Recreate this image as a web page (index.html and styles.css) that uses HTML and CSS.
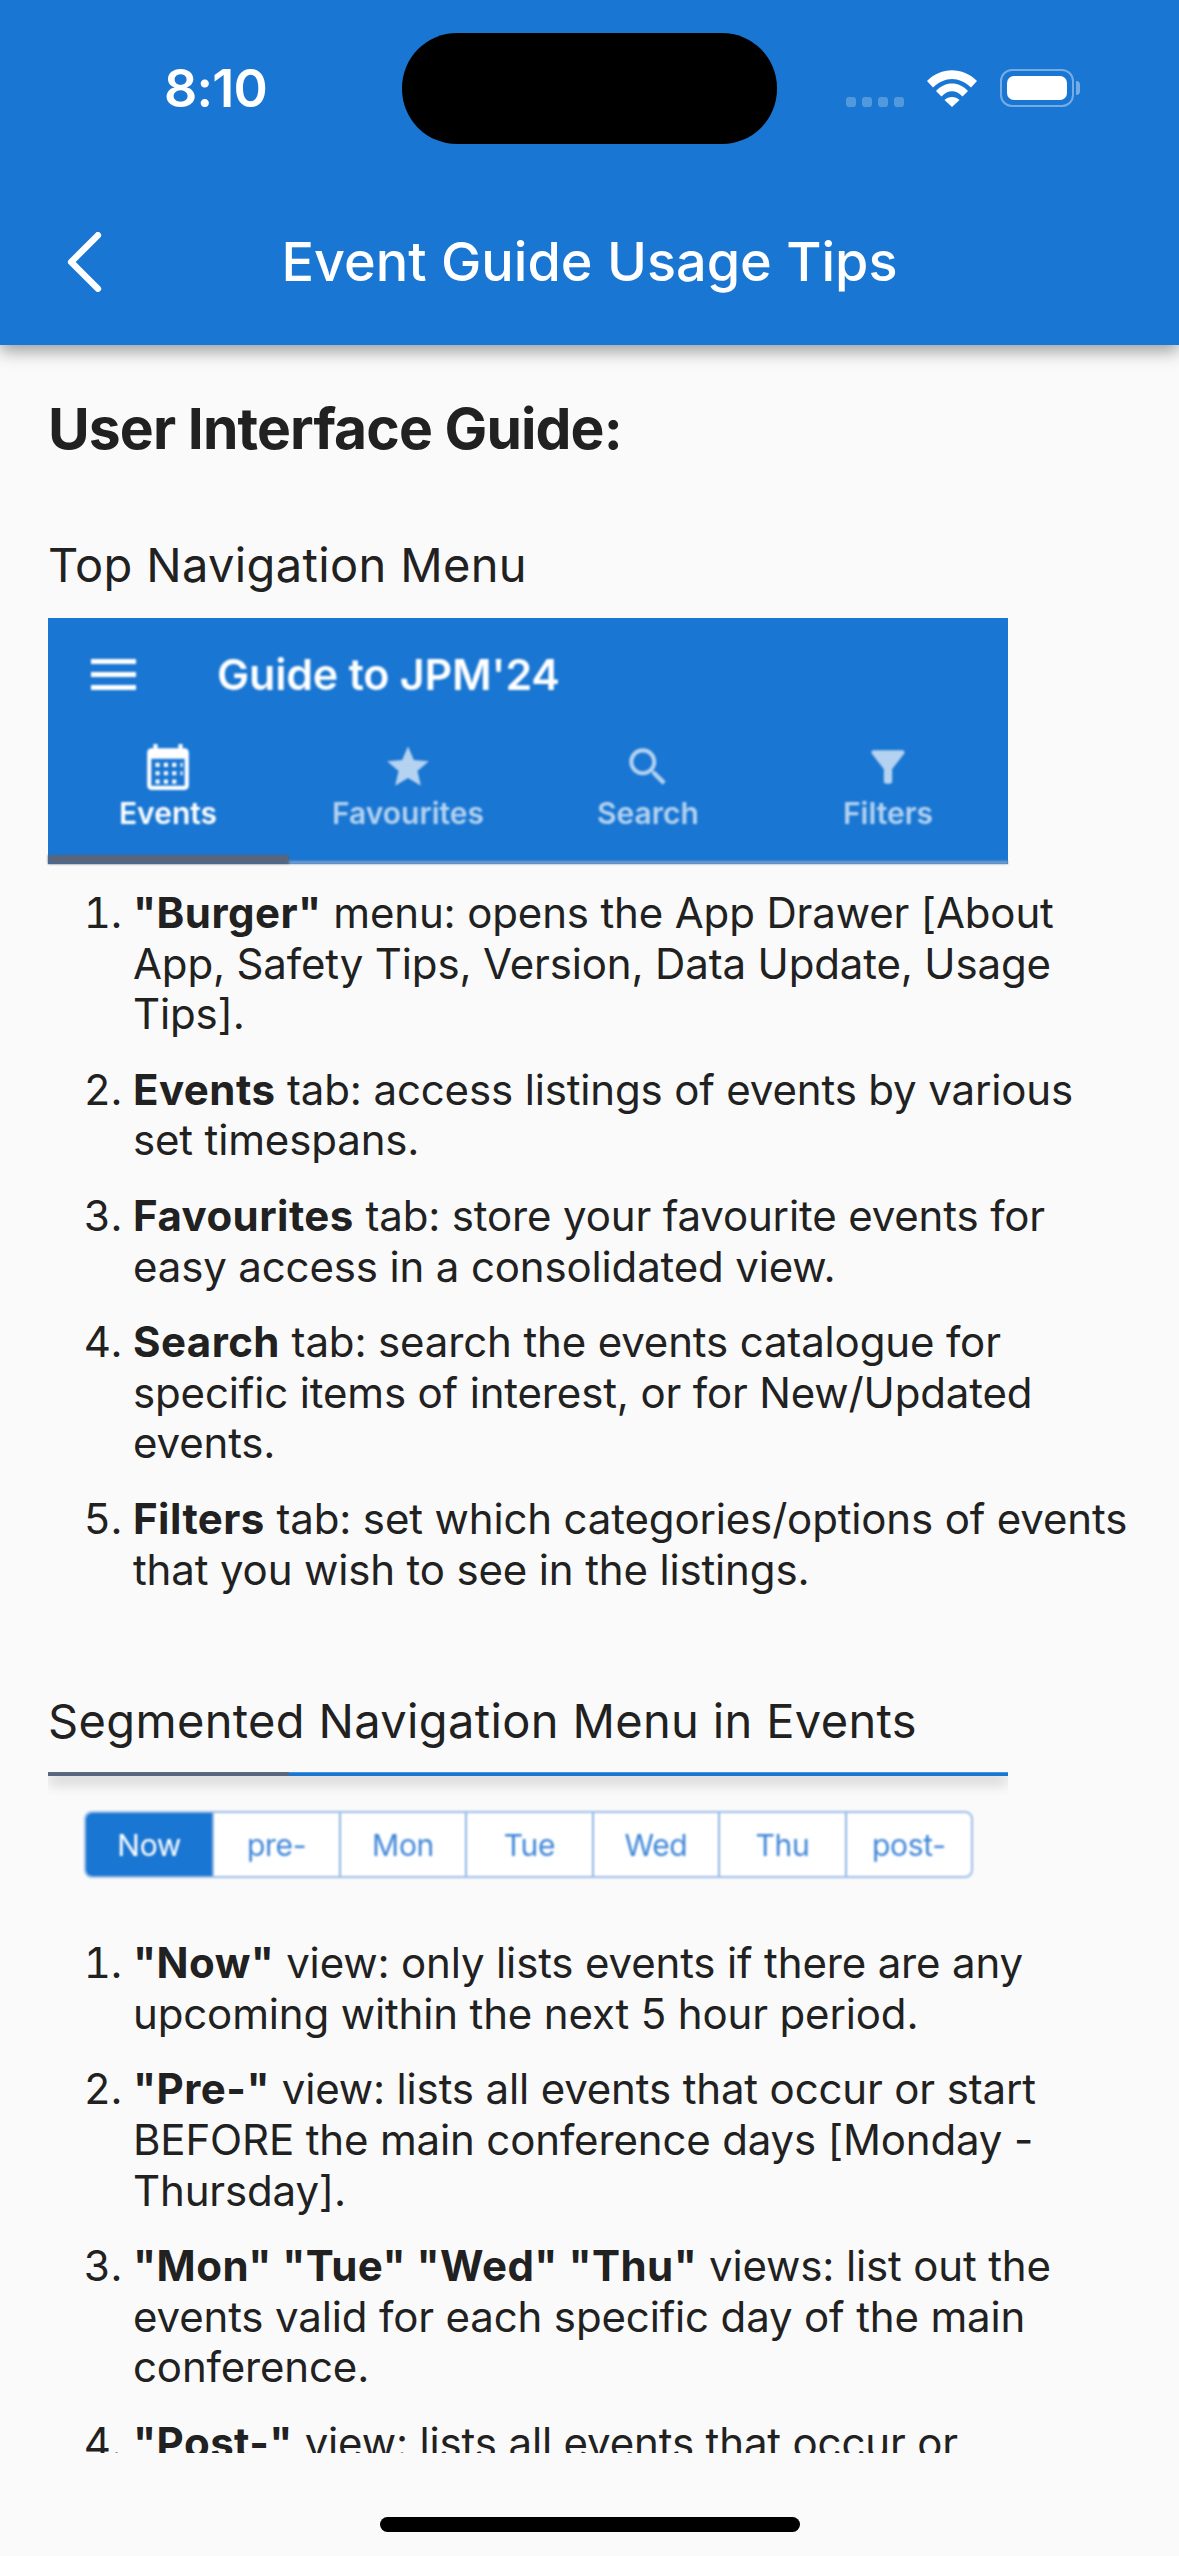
FILE: index.html
```html
<!DOCTYPE html>
<html lang="en">
<head>
  <meta charset="UTF-8">
  <meta name="viewport" content="width=device-width, initial-scale=1.0">
  <title>Event Guide Usage Tips</title>
  <link rel="stylesheet" href="styles.css">
</head>
<body>
  <header class="appbar">
    <div class="status">
      <span class="time">8:10</span>
      <div class="notch"></div>
      <div class="status-icons">
        <div class="signal"><i></i><i></i><i></i><i></i></div>
        <svg class="wifi" viewBox="0 0 50 37">
          <path d="M0 11C14-3.500 36-3.500 50 11l-6 6.500C32 6 18 6 6 17.500z"/>
          <path d="M9 21C18 11 32 11 41 21l-5.500 5.500C29 19.500 21 19.500 14.500 26.500z"/>
          <path d="M17.500 30c4-4 11-4 15 0L25 37z"/>
        </svg>
        <div class="battery"><div class="battery-fill"></div></div>
      </div>
    </div>
    <div class="toolbar">
      <svg class="back" viewBox="0 0 32 56"><path d="M29 3L4 28l25 25"/></svg>
      <h1>Event Guide Usage Tips</h1>
    </div>
  </header>

  <main class="content">
    <h2>User Interface Guide:</h2>

    <h3>Top Navigation Menu</h3>
    <div class="shot-tabs">
      <div class="shot-title">
        <svg class="burger" viewBox="0 0 45 31"><path d="M0 0h45v5H0zM0 13h45v5H0zM0 26h45v5H0z"/></svg>
        <span>Guide to JPM'24</span>
      </div>
      <div class="tabs">
        <div class="tab active">
          <svg viewBox="0 0 24 24"><path d="M20 3h-1V1h-2v2H7V1H5v2H4c-1.100 0-2 .9-2 2v16c0 1.100.9 2 2 2h16c1.100 0 2-.9 2-2V5c0-1.100-.9-2-2-2zm0 18H4V8h16v13z"/><path d="M6 10h2v2H6zM10 10h2v2h-2zM14 10h2v2h-2zM18 10h1v2h-1zM6 14h2v2H6zM10 14h2v2h-2zM14 14h2v2h-2zM18 14h1v2h-1zM6 18h2v2H6zM10 18h2v2h-2zM14 18h2v2h-2z"/></svg>
          <span>Events</span>
        </div>
        <div class="tab">
          <svg viewBox="0 0 24 24"><path d="M12 17.270L18.180 21l-1.640-7.030L22 9.240l-7.190-.61L12 2 9.190 8.630 2 9.240l5.460 4.730L5.820 21z"/></svg>
          <span>Favourites</span>
        </div>
        <div class="tab">
          <svg viewBox="0 0 24 24"><path d="M15.500 14h-.79l-.28-.27C15.410 12.590 16 11.110 16 9.500 16 5.910 13.090 3 9.500 3S3 5.910 3 9.500 5.910 16 9.500 16c1.610 0 3.090-.59 4.230-1.570l.27.28v.79l5 4.990L20.490 19l-4.990-5zm-6 0C7.010 14 5 11.990 5 9.500S7.010 5 9.500 5 14 7.010 14 9.500 11.990 14 9.500 14z"/></svg>
          <span>Search</span>
        </div>
        <div class="tab">
          <svg viewBox="0 0 24 24"><path d="M4.250 5.610C6.270 8.200 10 13 10 13v6c0 .55.45 1 1 1h2c.55 0 1-.45 1-1v-6s3.720-4.800 5.740-7.390A1 1 0 0 0 18.950 4H5.040a1 1 0 0 0-.79 1.610z"/></svg>
          <span>Filters</span>
        </div>
      </div>
      <div class="tab-rule"><div class="tab-marker"></div></div>
    </div>

    <ol>
      <li><b>"Burger"</b> menu: opens the App Drawer [About App, Safety Tips, Version, Data Update, Usage Tips].</li>
      <li><b>Events</b> tab: access listings of events by various set timespans.</li>
      <li><b>Favourites</b> tab: store your favourite events for easy access in a consolidated view.</li>
      <li><b>Search</b> tab: search the events catalogue for specific items of interest, or for New/Updated events.</li>
      <li><b>Filters</b> tab: set which categories/options of events that you wish to see in the listings.</li>
    </ol>

    <h3 class="second">Segmented Navigation Menu in Events</h3>
    <div class="shot-segments">
      <div class="seg-rule"><div class="seg-marker"></div></div>
      <div class="segments">
        <span class="selected">Now</span>
        <span>pre-</span>
        <span>Mon</span>
        <span>Tue</span>
        <span>Wed</span>
        <span>Thu</span>
        <span>post-</span>
      </div>
    </div>

    <ol class="second-list">
      <li><b>"Now"</b> view: only lists events if there are any upcoming within the next 5 hour period.</li>
      <li><b>"Pre-"</b> view: lists all events that occur or start BEFORE the main conference days [Monday - Thursday].</li>
      <li><b>"Mon" "Tue" "Wed" "Thu"</b> views: list out the events valid for each specific day of the main conference.</li>
      <li><b>"Post-"</b> view: lists all events that occur or<br>start AFTER the main conference days.</li>
    </ol>
  </main>

  <div class="home-area"><div class="home-bar"></div></div>
</body>
</html>
```

FILE: styles.css
```css
* {
  box-sizing: border-box;
}
html, body {
  margin: 0;
  padding: 0;
}
body {
  width: 1179px;
  height: 2556px;
  overflow: hidden;
  display: flex;
  flex-direction: column;
  font-family: Inter, "Liberation Sans", sans-serif;
  color: #212121;
  background-color: #fafafa;
}

/* app bar */
.appbar {
  position: relative;
  z-index: 2;
  height: 345px;
  flex: none;
  background-color: #1976d2;
  box-shadow: 0 6px 16px rgba(0, 0, 0, 0.38);
  color: #fff;
}
.status {
  height: 176px;
  display: flex;
  align-items: center;
  justify-content: space-between;
  padding: 0 98px 0 164px;
}
.time {
  font-size: 52px;
  font-weight: 600;
  letter-spacing: -0.8px;
}
.notch {
  position: absolute;
  left: 402px;
  top: 33px;
  width: 375px;
  height: 111px;
  border-radius: 55px;
  background-color: #000;
}
.status-icons {
  display: flex;
  align-items: flex-end;
  gap: 23px;
  height: 38px;
}
.signal {
  display: flex;
  gap: 6px;
}
.signal i {
  width: 10px;
  height: 10px;
  border-radius: 3px;
  background-color: rgba(255, 255, 255, 0.25);
}
.wifi {
  width: 50px;
  height: 37px;
  fill: #fff;
}
.battery {
  position: relative;
  width: 74px;
  height: 38px;
  padding: 5px;
  border: 2px solid rgba(255, 255, 255, 0.4);
  border-radius: 12px;
  margin-right: 7px;
}
.battery::after {
  content: "";
  position: absolute;
  right: -8px;
  top: 10px;
  width: 4px;
  height: 14px;
  border-radius: 0 7px 7px 0;
  background-color: rgba(255, 255, 255, 0.4);
}
.battery-fill {
  height: 100%;
  border-radius: 7px;
  background-color: #fff;
}
.toolbar {
  height: 169px;
  display: grid;
  grid-template-columns: 1fr auto 1fr;
  align-items: center;
  padding: 2px 0 0 66px;
}
.back {
  width: 36px;
  height: 60px;
  fill: none;
  stroke: #fff;
  stroke-width: 6;
  stroke-linecap: round;
  stroke-linejoin: round;
}
.toolbar h1 {
  margin: 0 0 0 -66px;
  font-size: 54px;
  font-weight: 500;
}

/* content */
.content {
  flex: none;
  height: 2108px;
  overflow: hidden;
  padding: 0 41px 0 49px;
}
.content h2 {
  margin: 53px 0 0 -1px;
  font-size: 57px;
  line-height: 62px;
  font-weight: 700;
  letter-spacing: -0.9px;
}
.content h3 {
  margin: 77px 0 25px -1px;
  font-size: 47px;
  line-height: 56px;
  font-weight: 400;
  letter-spacing: 0.35px;
}
.content h3.second {
  margin: 98px 0 23px -1px;
}
ol {
  margin: 24px 0 0;
  padding-left: 84px;
  font-size: 42px;
  line-height: 50.600px;
  letter-spacing: -0.15px;
}
ol.second-list {
  margin-top: 60px;
}
li {
  margin-bottom: 25px;
}
li b {
  font-weight: 700;
  letter-spacing: 0.45px;
}

/* first picture: tab bar of the guide */
.shot-tabs {
  width: 960px;
  height: 246px;
  margin-left: -1px;
  background-color: #1976d2;
  color: #fff;
  display: flex;
  flex-direction: column;
}
.shot-tabs > * {
  filter: blur(0.8px);
}
.shot-title {
  height: 124px;
  display: flex;
  align-items: center;
  gap: 81px;
  padding: 0 0 12px 43px;
  font-size: 43px;
  font-weight: 600;
  letter-spacing: -0.2px;
}
.burger {
  width: 45px;
  height: 31px;
  fill: #fff;
}
.tabs {
  display: flex;
  height: 113px;
}
.tab {
  width: 240px;
  display: flex;
  flex-direction: column;
  align-items: center;
  font-size: 30px;
  font-weight: 600;
  color: rgba(255, 255, 255, 0.68);
}
.tab svg {
  width: 50px;
  height: 50px;
  margin-bottom: 3px;
  fill: rgba(255, 255, 255, 0.68);
}
.tab.active {
  color: #fff;
}
.tab.active svg {
  fill: #fff;
}
.tab-rule {
  position: relative;
  height: 3px;
  margin-top: auto;
  background-color: #7f9fc8;
}
.tab-marker {
  position: absolute;
  left: 0;
  bottom: 0;
  width: 241px;
  height: 9px;
  background-color: #59657a;
}

/* second picture: segmented control */
.shot-segments {
  width: 960px;
  margin-left: -1px;
}
.seg-rule {
  position: relative;
  height: 4px;
  background-color: #1976d2;
  box-shadow: 0 5px 14px rgba(0, 0, 0, 0.42);
  clip-path: inset(0 0 -30px 0);
}
.seg-marker {
  width: 241px;
  height: 4px;
  background-color: #59657a;
}
.segments {
  display: grid;
  grid-template-columns: repeat(7, 1fr);
  width: 889px;
  height: 67px;
  margin: 35px 0 0 36px;
  border: 2px solid #9dbde8;
  border-radius: 8px;
  background-color: #fff;
  font-size: 30px;
  letter-spacing: -0.3px;
  color: #3f86d8;
  filter: blur(0.8px);
}
.segments span {
  display: flex;
  align-items: center;
  justify-content: center;
  border-left: 2px solid #8db5e4;
}
.segments .selected {
  border-left: none;
  border-radius: 6px 0 0 6px;
  background-color: #1976d2;
  color: #fff;
}

/* bottom */
.home-area {
  flex: 1;
  padding-top: 64px;
}
.home-bar {
  width: 420px;
  height: 15px;
  margin: 0 auto;
  border-radius: 8px;
  background-color: #000;
}
```
